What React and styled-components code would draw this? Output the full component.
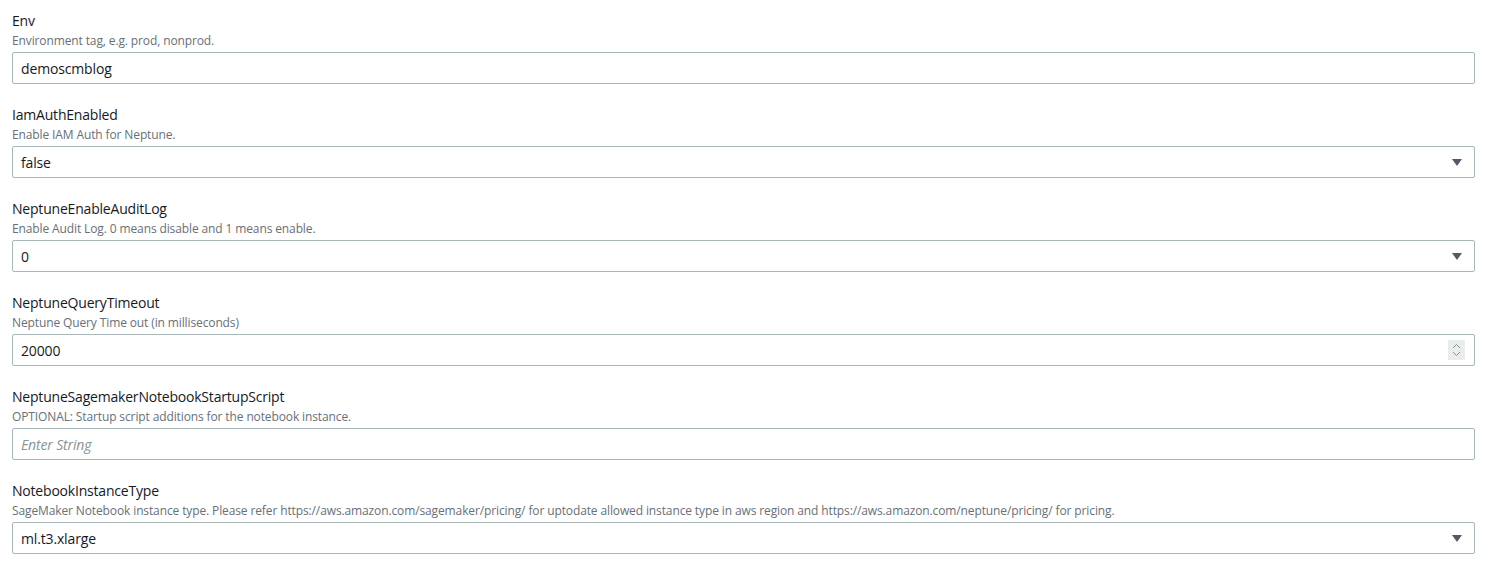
import React from 'react';
import styled, { createGlobalStyle } from 'styled-components';

const GlobalStyle = createGlobalStyle`
  html, body {
    margin: 0;
    padding: 0;
    background: #ffffff;
  }
  body {
    font-family: "Open Sans", "Noto Sans", sans-serif;
    color: #16191f;
  }
`;

const Form = styled.div`
  display: flex;
  flex-direction: column;
  gap: 20px;
  padding: 10px 17px 0 12px;
`;

const Field = styled.div`
  display: flex;
  flex-direction: column;
`;

const Label = styled.label`
  font-size: 14px;
  line-height: 22px;
  letter-spacing: -0.2px;
  color: #16191f;
`;

const Description = styled.div`
  margin-top: 1px;
  font-size: 12px;
  line-height: 16px;
  letter-spacing: -0.12px;
  color: #687078;
`;

const Control = styled.div`
  margin-top: 3px;
  height: 32px;
  box-sizing: border-box;
  border: 1px solid #aab7b8;
  border-radius: 2px;
  display: flex;
  align-items: center;
  padding: 0 8px;
  font-size: 14px;
  letter-spacing: -0.15px;
  color: ${(p) => (p.$placeholder ? '#879596' : '#16191f')};
  font-style: ${(p) => (p.$placeholder ? 'italic' : 'normal')};
`;

const Value = styled.span`
  flex: 1;
`;

const Caret = styled.span`
  width: 0;
  height: 0;
  margin-right: 4px;
  border-left: 5px solid transparent;
  border-right: 5px solid transparent;
  border-top: 7px solid #545b64;
`;

const Spinner = styled.span`
  width: 17px;
  height: 20px;
  margin-right: 1px;
  background: #eaeded;
  display: flex;
  align-items: center;
  justify-content: center;
`;

const SpinIcon = () => (
  <svg width="9" height="14" viewBox="0 0 9 14" fill="none" stroke="#879596" strokeWidth="1">
    <path d="M1 5l3.5-3.5L8 5" />
    <path d="M1 9l3.5 3.5L8 9" />
  </svg>
);

const fields = [
  { label: 'Env', desc: 'Environment tag, e.g. prod, nonprod.', value: 'demoscmblog', kind: 'text' },
  { label: 'IamAuthEnabled', desc: 'Enable IAM Auth for Neptune.', value: 'false', kind: 'select' },
  { label: 'NeptuneEnableAuditLog', desc: 'Enable Audit Log. 0 means disable and 1 means enable.', value: '0', kind: 'select' },
  { label: 'NeptuneQueryTimeout', desc: 'Neptune Query Time out (in milliseconds)', value: '20000', kind: 'number' },
  { label: 'NeptuneSagemakerNotebookStartupScript', desc: 'OPTIONAL: Startup script additions for the notebook instance.', value: '', placeholder: 'Enter String', kind: 'text' },
  {
    label: 'NotebookInstanceType',
    desc: 'SageMaker Notebook instance type. Please refer https://aws.amazon.com/sagemaker/pricing/ for uptodate allowed instance type in aws region and https://aws.amazon.com/neptune/pricing/ for pricing.',
    value: 'ml.t3.xlarge',
    kind: 'select',
  },
];

export default function App() {
  return (
    <>
      <GlobalStyle />
      <Form>
        {fields.map((f) => (
          <Field key={f.label}>
            <Label>{f.label}</Label>
            <Description>{f.desc}</Description>
            <Control $placeholder={!f.value}>
              <Value>{f.value || f.placeholder}</Value>
              {f.kind === 'select' && <Caret />}
              {f.kind === 'number' && (
                <Spinner>
                  <SpinIcon />
                </Spinner>
              )}
            </Control>
          </Field>
        ))}
      </Form>
    </>
  );
}
